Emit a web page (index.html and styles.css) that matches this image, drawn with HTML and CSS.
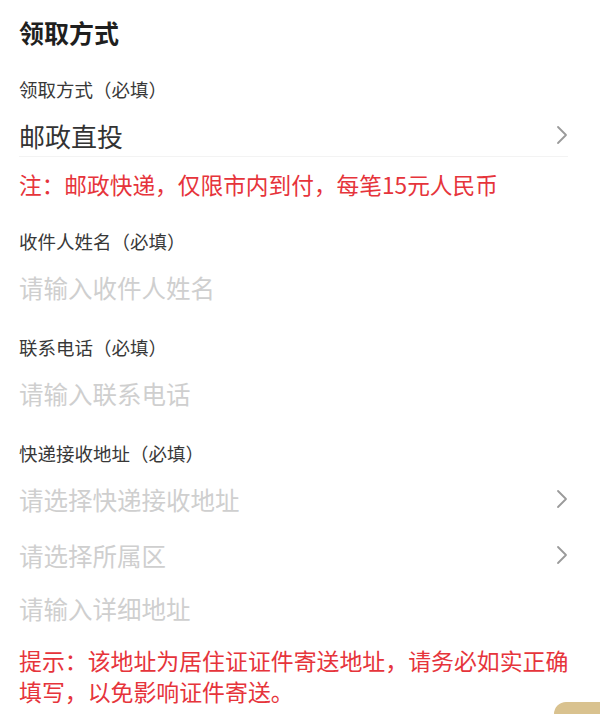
FILE: index.html
```html
<!DOCTYPE html>
<html lang="zh-CN">
<head>
<meta charset="utf-8">
<link rel="stylesheet" href="styles.css">
</head>
<body>
<div class="page">
  <h1 class="title">领取方式</h1>

  <div class="label first">领取方式（必填）</div>
  <div class="row value bordered">
    <span>邮政直投</span>
    <svg class="chev" viewBox="0 0 12 20" width="12" height="20"><path d="M2 2 L10 10 L2 18" fill="none" stroke="#9a9a9a" stroke-width="1.8" stroke-linecap="round" stroke-linejoin="round"/></svg>
  </div>
  <div class="note">注：邮政快递，仅限市内到付，每笔15元人民币</div>

  <div class="label">收件人姓名（必填）</div>
  <div class="row placeholder"><span>请输入收件人姓名</span></div>

  <div class="label">联系电话（必填）</div>
  <div class="row placeholder"><span>请输入联系电话</span></div>

  <div class="label">快递接收地址（必填）</div>
  <div class="row placeholder">
    <span>请选择快递接收地址</span>
    <svg class="chev" viewBox="0 0 12 20" width="12" height="20"><path d="M2 2 L10 10 L2 18" fill="none" stroke="#9a9a9a" stroke-width="1.8" stroke-linecap="round" stroke-linejoin="round"/></svg>
  </div>
  <div class="row placeholder">
    <span>请选择所属区</span>
    <svg class="chev" viewBox="0 0 12 20" width="12" height="20"><path d="M2 2 L10 10 L2 18" fill="none" stroke="#9a9a9a" stroke-width="1.8" stroke-linecap="round" stroke-linejoin="round"/></svg>
  </div>
  <div class="row placeholder tight"><span>请输入详细地址</span></div>

  <div class="note tip">提示：该地址为居住证证件寄送地址，请务必如实正确填写，以免影响证件寄送。</div>
</div>
<div class="corner"></div>
</body>
</html>
```

FILE: styles.css
```css
html, body {
  margin: 0;
  padding: 0;
  background: #ffffff;
  width: 600px;
  height: 714px;
  overflow: hidden;
  position: relative;
}

.page {
  font-family: "Noto Sans CJK SC", "Noto Sans", sans-serif;
  padding: 18px 32px 0 19px;
  display: flex;
  flex-direction: column;
}

.title {
  margin: 0;
  font-size: 25px;
  line-height: 28px;
  height: 28px;
  font-weight: 700;
  color: #1f1f1f;
}

.label {
  margin-top: 29px;
  font-size: 18.5px;
  line-height: 24px;
  height: 24px;
  color: #383838;
  white-space: nowrap;
}

.label.first {
  margin-top: 31px;
}

.row {
  margin-top: 13px;
  height: 42px;
  display: flex;
  align-items: center;
  justify-content: space-between;
  font-size: 22.5px;
  white-space: nowrap;
}

.row + .row {
  margin-top: 14px;
}

.row.tight {
  margin-top: 11px;
}

.value {
  color: #333333;
  font-size: 26px;
}

.bordered {
  border-bottom: 1px solid #f3f3f3;
}

.placeholder {
  color: #cfcfcf;
  font-size: 24.5px;
}

.chev {
  display: block;
  margin-right: 0;
}

.note {
  margin-top: 13px;
  font-size: 22.7px;
  line-height: 30px;
  color: #e6343b;
  white-space: nowrap;
}

.note + .label {
  margin-top: 29px;
}

.placeholder + .label {
  margin-top: 27px;
}

.tip {
  margin-top: 16px;
  white-space: normal;
  line-height: 31px;
  font-size: 22.9px;
  margin-right: -8px;
}

.corner {
  position: absolute;
  right: 0;
  bottom: 0;
  width: 46px;
  height: 12px;
  background: #d9c28f;
  border-top-left-radius: 12px;
}
```
